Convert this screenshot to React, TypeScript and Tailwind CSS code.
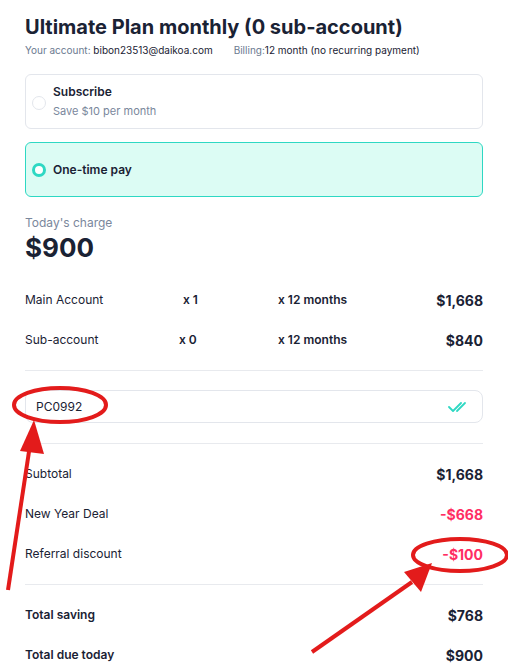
import React from "react";

const rows = [
  { label: "Main Account", qty: "x 1", qtyPad: "pl-[158px]", months: "x 12 months", total: "$1,668" },
  { label: "Sub-account", qty: "x 0", qtyPad: "pl-[154px]", months: "x 12 months", total: "$840" },
];

function Annotations() {
  return (
    <svg className="absolute inset-0 pointer-events-none" width="508" height="672" viewBox="0 0 508 672">
      <g stroke="#e31b1b" strokeWidth="4" fill="none">
        <ellipse cx="60" cy="405" rx="46" ry="17" />
        <ellipse cx="460" cy="555" rx="47" ry="16" />
        <line x1="8" y1="590" x2="30" y2="445" />
        <line x1="312" y1="652" x2="412" y2="582" />
      </g>
      <g fill="#e31b1b">
        <polygon points="34,420 20,451 44,454" />
        <polygon points="432,563 404,572 421,592" />
      </g>
    </svg>
  );
}

export default function App() {
  return (
    <div className="relative w-[508px] h-[672px] overflow-hidden bg-white font-['Inter',sans-serif] text-[#1a2234]">
      <div className="px-[25px] pt-[13px]">
        <h1 className="text-[20px] font-bold leading-[28px]">Ultimate Plan monthly (0 sub-account)</h1>
        <div className="flex text-[10px] leading-[16px] mt-[1px]">
          <span className="text-[#6b7a90]">Your account:&nbsp;</span>
          <span>bibon23513@daikoa.com</span>
          <span className="text-[#6b7a90] ml-[21px]">Billing:</span>
          <span>12 month (no recurring payment)</span>
        </div>

        <div className="mt-[16px] h-[55px] rounded-[6px] border border-[#e3e6ec] flex items-center gap-[7px] px-[6px]">
          <div className="w-[14px] h-[14px] rounded-full border border-[#e3e6ec] mt-[2px]" />
          <div>
            <div className="text-[12px] font-semibold leading-[16px]">Subscribe</div>
            <div className="text-[11px] text-[#7a879c] leading-[16px] mt-[3px]">Save $10 per month</div>
          </div>
        </div>

        <div className="mt-[13px] h-[55px] rounded-[6px] border border-[#2ed8c3] bg-[#dcfcf4] flex items-center gap-[7px] px-[6px]">
          <div className="w-[14px] h-[14px] rounded-full border-[3px] border-[#2ed8c3] bg-white" />
          <div className="text-[12px] font-semibold leading-[16px]">One-time pay</div>
        </div>

        <div className="mt-[18px] text-[12px] text-[#7a879c] leading-[16px]">Today's charge</div>
        <div className="text-[26px] font-bold leading-[32px] mt-[1px]">$900</div>

        <div className="mt-[16px]">
          {rows.map((r) => (
            <div key={r.label} className="flex items-center h-[40px] text-[12px]">
              <span className="w-[0px] whitespace-nowrap">{r.label}</span>
              <span className={`${r.qtyPad} w-[253px] font-semibold whitespace-nowrap`}>{r.qty}</span>
              <span className="font-semibold whitespace-nowrap">{r.months}</span>
              <span className="ml-auto text-[14px] font-bold">{r.total}</span>
            </div>
          ))}
        </div>

        <div className="mt-[10px] border-t border-[#e8eaee]" />

        <div className="mt-[19px] h-[33px] rounded-[8px] border border-[#e3e6ec] flex items-center pl-[10px] pr-[12px]">
          <span className="text-[12px]">PC0992</span>
          <svg className="ml-auto" width="22" height="12" viewBox="0 0 22 12" fill="none" stroke="#2ed8c3" strokeWidth="1.8" strokeLinecap="round" strokeLinejoin="round">
            <path d="M1 6l4 4 8-8" />
            <path d="M9 10l8-8" />
          </svg>
        </div>

        <div className="mt-[20px] border-t border-[#e8eaee]" />

        <div className="mt-[10px]">
          <div className="flex items-center h-[40px] text-[12px]">
            <span>Subtotal</span>
            <span className="ml-auto text-[14px] font-bold">$1,668</span>
          </div>
          <div className="flex items-center h-[40px] text-[12px]">
            <span>New Year Deal</span>
            <span className="ml-auto text-[14px] font-bold text-[#ff2e63]">-$668</span>
          </div>
          <div className="flex items-center h-[40px] text-[12px]">
            <span>Referral discount</span>
            <span className="ml-auto text-[14px] font-bold text-[#ff2e63]">-$100</span>
          </div>
        </div>

        <div className="mt-[10px] border-t border-[#e8eaee]" />

        <div className="mt-[10px]">
          <div className="flex items-center h-[40px] text-[12px] font-semibold">
            <span>Total saving</span>
            <span className="ml-auto text-[14px] font-bold">$768</span>
          </div>
          <div className="flex items-center h-[40px] text-[12px] font-semibold">
            <span>Total due today</span>
            <span className="ml-auto text-[14px] font-bold">$900</span>
          </div>
        </div>
      </div>
      <Annotations />
    </div>
  );
}
